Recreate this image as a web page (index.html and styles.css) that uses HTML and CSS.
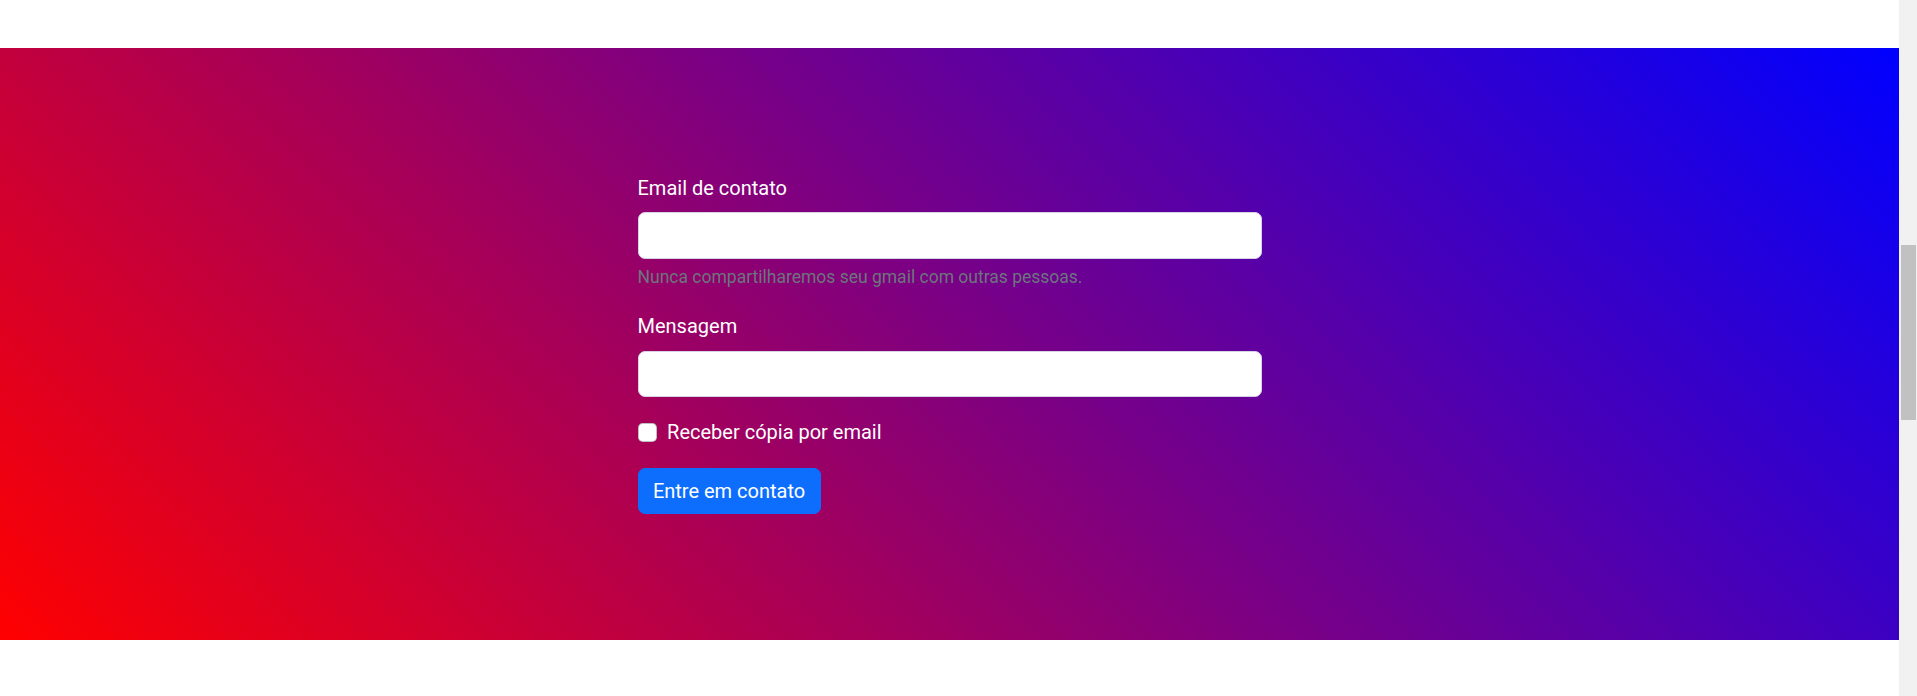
FILE: index.html
```html
<!DOCTYPE html>
<html lang="pt-BR">
<head>
<meta charset="utf-8">
<title>Contato</title>
<link rel="stylesheet" href="styles.css">
</head>
<body>
<div class="page">
  <div class="spacer-top"></div>
  <section class="contact">
    <form class="contact-form">
      <div class="group">
        <label class="field-label" for="email">Email de contato</label>
        <input class="field-input" id="email" type="email">
        <div class="field-help">Nunca compartilharemos seu gmail com outras pessoas.</div>
      </div>
      <div class="group">
        <label class="field-label" for="msg">Mensagem</label>
        <input class="field-input" id="msg" type="text">
      </div>
      <div class="check-row">
        <input class="check-box" id="copy" type="checkbox">
        <label class="check-label" for="copy">Receber cópia por email</label>
      </div>
      <button class="btn-primary" type="button">Entre em contato</button>
    </form>
  </section>
  <div class="spacer-bottom"></div>
</div>
<div class="scrollbar" aria-hidden="true"><div class="scrollbar-thumb"></div></div>
</body>
</html>
```
FILE: styles.css
```css
body {
  margin: 0;
  font-family: Roboto, "Liberation Sans", sans-serif;
  font-size: 20px;
  line-height: 1.5;
  color: #212529;
  background: #fff;
}
.page { margin-right: 18px; }
.spacer-top { height: 48px; }
.spacer-bottom { height: 56px; }
.contact {
  height: 592px;
  background: linear-gradient(45deg, #ff0000, #0000ff);
  display: flex;
  align-items: center;
  justify-content: center;
}
.contact-form {
  width: 624px;
  display: flex;
  flex-direction: column;
  align-items: flex-start;
}
.group {
  width: 100%;
  display: flex;
  flex-direction: column;
}
.group + .group { margin-top: 22.3px; }
.field-label {
  color: #fff;
  line-height: 28.8px;
  margin-bottom: 9.6px;
}
.field-input {
  box-sizing: border-box;
  width: 100%;
  height: 46.5px;
  margin: 0;
  border: 1px solid #d6d3e4;
  border-radius: 7px;
  background: #fff;
  font: inherit;
  padding: 0 14px;
}
.field-help {
  margin-top: 5.8px;
  font-size: 17.5px;
  line-height: 25.2px;
  color: #6c757d;
}
.check-row {
  display: flex;
  align-items: center;
  height: 28.8px;
  margin-top: 21.1px;
}
.check-box {
  appearance: none;
  -webkit-appearance: none;
  width: 19.4px;
  height: 19.4px;
  margin: 0 10.2px 0 0;
  background: #fff;
  border: 1px solid rgba(0,0,0,.25);
  border-radius: 4.8px;
  box-sizing: border-box;
}
.check-label {
  color: #fff;
  line-height: 28.8px;
}
.btn-primary {
  margin-top: 20.9px;
  height: 46px;
  padding: 0 14.4px;
  background: #0d6efd;
  color: #fff;
  border: 1.2px solid #0d6efd;
  border-radius: 7px;
  font: inherit;
  line-height: 1.5;
  cursor: pointer;
}
.scrollbar {
  position: fixed;
  top: 0;
  right: 0;
  width: 18px;
  height: 100vh;
  background: #f1f1f1;
}
.scrollbar-thumb {
  margin: 245px 1px 0 2px;
  height: 175px;
  background: #c1c1c1;
}
```
